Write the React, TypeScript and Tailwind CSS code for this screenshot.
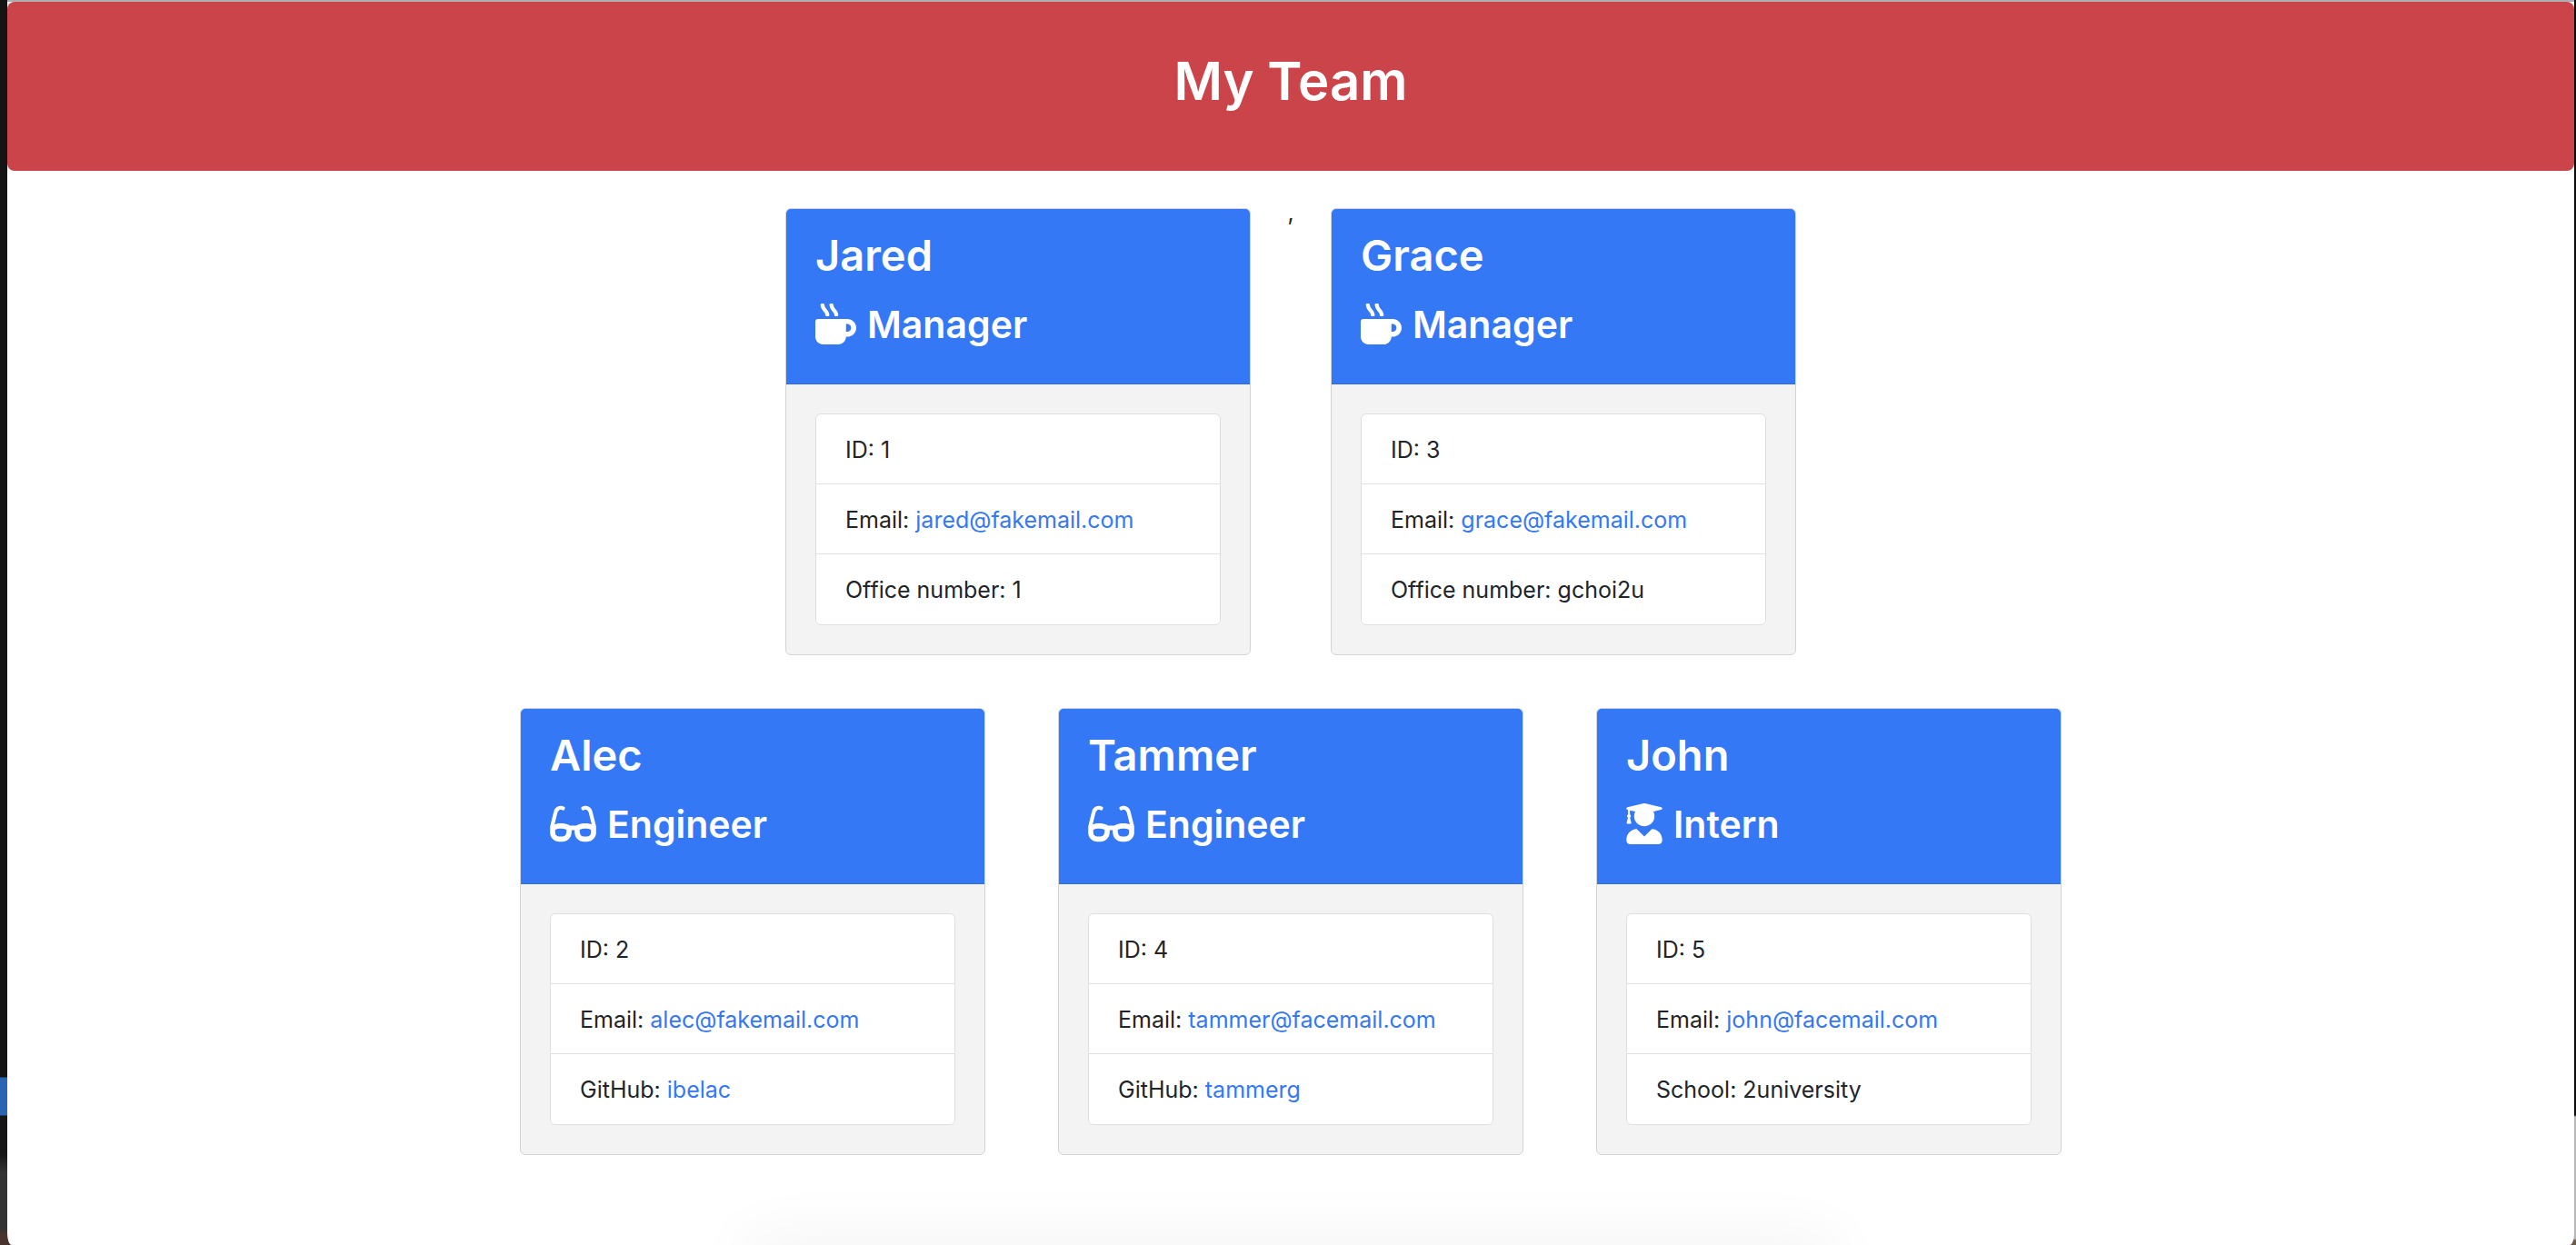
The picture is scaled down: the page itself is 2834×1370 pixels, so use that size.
import type { ReactNode } from "react";
import { FaGlasses, FaMugHot, FaUserGraduate } from "react-icons/fa";

type Role = "Manager" | "Engineer" | "Intern";

type Member = {
  id: number;
  name: string;
  role: Role;
  email: string;
  detail: ReactNode;
};

const linkClass = "text-[#3478f6] hover:underline";

function GitHubLink({ user }: { user: string }) {
  return (
    <>
      GitHub:{" "}
      <a className={linkClass} href={`https://github.com/${user}`}>
        {user}
      </a>
    </>
  );
}

const managers: Member[] = [
  { id: 1, name: "Jared", role: "Manager", email: "jared@fakemail.com", detail: "Office number: 1" },
  { id: 3, name: "Grace", role: "Manager", email: "grace@fakemail.com", detail: "Office number: gchoi2u" },
];

const staff: Member[] = [
  { id: 2, name: "Alec", role: "Engineer", email: "alec@fakemail.com", detail: <GitHubLink user="ibelac" /> },
  { id: 4, name: "Tammer", role: "Engineer", email: "tammer@facemail.com", detail: <GitHubLink user="tammerg" /> },
  { id: 5, name: "John", role: "Intern", email: "john@facemail.com", detail: "School: 2university" },
];

function RoleIcon({ role }: { role: Role }) {
  if (role === "Manager") return <FaMugHot className="mb-0.5 h-[45px] w-[45px] shrink-0" aria-hidden />;
  if (role === "Engineer") return <FaGlasses className="mb-0.5 h-[45px] w-[51px] shrink-0" aria-hidden />;
  return <FaUserGraduate className="mb-0.5 h-[45px] w-[40px] shrink-0" aria-hidden />;
}

function MemberCard({ member }: { member: Member }) {
  return (
    <article className="w-full max-w-[512px] overflow-hidden rounded-md border border-[#d4d4d4] bg-[#f3f3f3]">
      <header className="border-b border-[#2f6cdd] bg-[#3478f6] px-8 pt-5 pb-[38px] font-semibold text-white">
        <h2 className="mb-[18px] text-[47px] leading-[62px]">{member.name}</h2>
        <h3 className="flex items-center gap-3 text-[41px] leading-[54px]">
          <RoleIcon role={member.role} />
          {member.role}
        </h3>
      </header>
      <div className="p-8">
        <ul className="divide-y divide-[#dfdfdf] rounded-md border border-[#dfdfdf] bg-white text-[25px] leading-9">
          <li className="px-8 pt-[21px] pb-[19px]">ID: {member.id}</li>
          <li className="px-8 pt-[21px] pb-[19px]">
            Email:{" "}
            <a className={linkClass} href={`mailto:${member.email}`}>
              {member.email}
            </a>
          </li>
          <li className="px-8 pt-[21px] pb-5">{member.detail}</li>
        </ul>
      </div>
    </article>
  );
}

export default function App() {
  return (
    <div className="flex min-h-screen [background:linear-gradient(to_bottom,#141414_1185px,#2a65b4_1186px,#2a65b4_1227px,#161616_1228px,#161616_1270px,#333333_1290px,#333333_1350px,#4a332c_1360px)_left/50%_100%_no-repeat,linear-gradient(to_bottom,#0c0c0c_1227px,#b8b8b8_1229px,#b8b8b8_1363px,#6b5a48_1365px)_right/50%_100%_no-repeat] pr-0.5 pl-2 font-[Inter,'Liberation_Sans',sans-serif] text-[#212529]">
      <div className="relative flex-1 overflow-hidden rounded-[0_0_5px_5px/0_0_13px_13px] border-t-2 border-[#adadb2] bg-white">
        <header className="rounded-lg bg-[#cb444a] px-8 pt-12 pb-[60px] text-center">
          <h1 className="text-[58px] leading-[78px] font-semibold text-white">My Team</h1>
        </header>
        <main className="flex flex-col gap-[58px] px-8 pt-[41px] pb-[99px]">
          <section className="flex justify-center gap-10">
            <MemberCard member={managers[0]} />
            <span className="w-2 text-center text-[25px] leading-[10px]">,</span>
            <MemberCard member={managers[1]} />
          </section>
          <section className="flex justify-center gap-20">
            {staff.map((member) => (
              <MemberCard key={member.id} member={member} />
            ))}
          </section>
        </main>
        <div className="pointer-events-none absolute inset-x-[29%] top-full h-10 shadow-[0_0_70px_5px_rgba(0,0,0,0.06)]" />
      </div>
    </div>
  );
}
